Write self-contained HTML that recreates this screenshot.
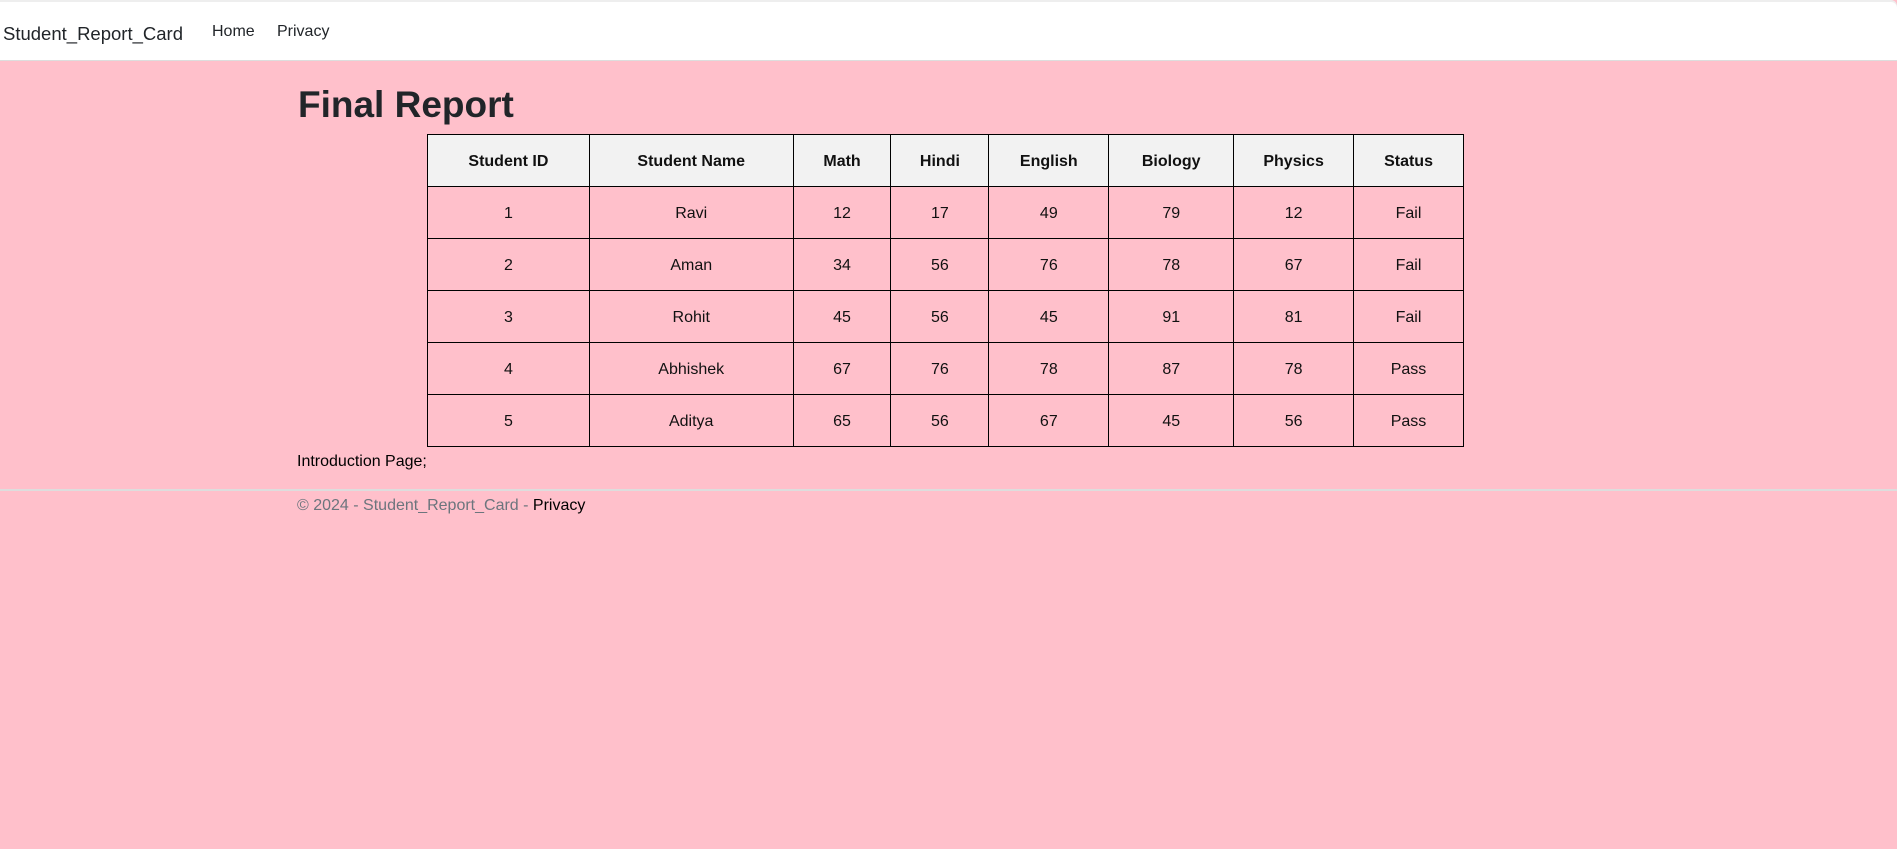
<!DOCTYPE html>
<html><head><meta charset="utf-8"><style>
html,body{margin:0;padding:0}
body{width:1903px;height:849px;background:#fff;font-family:"Liberation Sans",sans-serif;font-size:16px;color:#212529;position:relative;overflow:hidden}
.page{position:absolute;left:0;top:0;width:1897px;height:849px;background:#ffc0cb}
.nav{position:absolute;left:0;top:2px;width:1897px;height:58px;background:#fff;border-bottom:1px solid #ddd;border-top-right-radius:6px;box-shadow:0 -2px 0 #eee}
.brand{position:absolute;left:3px;top:21px;font-size:18.5px;color:#212529}
.nl{position:absolute;top:21px;font-size:16px;color:#212529}
h1{position:absolute;left:298px;top:81px;margin:0;font-size:37px;font-weight:bold;line-height:48px;color:#212529}
table{position:absolute;left:427px;top:134px;border-collapse:collapse;width:1037px}
td,th{border:1.5px solid #000;height:49px;padding:2px 0 0;text-align:center;font-size:16px;color:#111}
th{background:#f2f2f2;font-weight:bold}
.intro{position:absolute;left:297px;top:453px;color:#000}
.fl{position:absolute;left:0;top:489px;width:1897px;height:2px;background:#ddd}
.foot{position:absolute;left:297px;top:497px;color:#6c757d}
.foot span{color:#000}
</style></head><body>
<div class="page">
<div class="nav"><div class="brand">Student_Report_Card</div><div class="nl" style="left:212px">Home</div><div class="nl" style="left:277px">Privacy</div></div>
<h1>Final Report</h1>
<table>
<colgroup><col style="width:162px"><col style="width:204px"><col style="width:98px"><col style="width:98px"><col style="width:120px"><col style="width:125px"><col style="width:120px"><col style="width:110px"></colgroup>
<tr><th>Student ID</th><th>Student Name</th><th>Math</th><th>Hindi</th><th>English</th><th>Biology</th><th>Physics</th><th>Status</th></tr>
<tr><td>1</td><td>Ravi</td><td>12</td><td>17</td><td>49</td><td>79</td><td>12</td><td>Fail</td></tr>
<tr><td>2</td><td>Aman</td><td>34</td><td>56</td><td>76</td><td>78</td><td>67</td><td>Fail</td></tr>
<tr><td>3</td><td>Rohit</td><td>45</td><td>56</td><td>45</td><td>91</td><td>81</td><td>Fail</td></tr>
<tr><td>4</td><td>Abhishek</td><td>67</td><td>76</td><td>78</td><td>87</td><td>78</td><td>Pass</td></tr>
<tr><td>5</td><td>Aditya</td><td>65</td><td>56</td><td>67</td><td>45</td><td>56</td><td>Pass</td></tr>
</table>
<div class="intro">Introduction Page;</div>
<div class="fl"></div>
<div class="foot">© 2024 - Student_Report_Card - <span>Privacy</span></div>
</div>
</body></html>
